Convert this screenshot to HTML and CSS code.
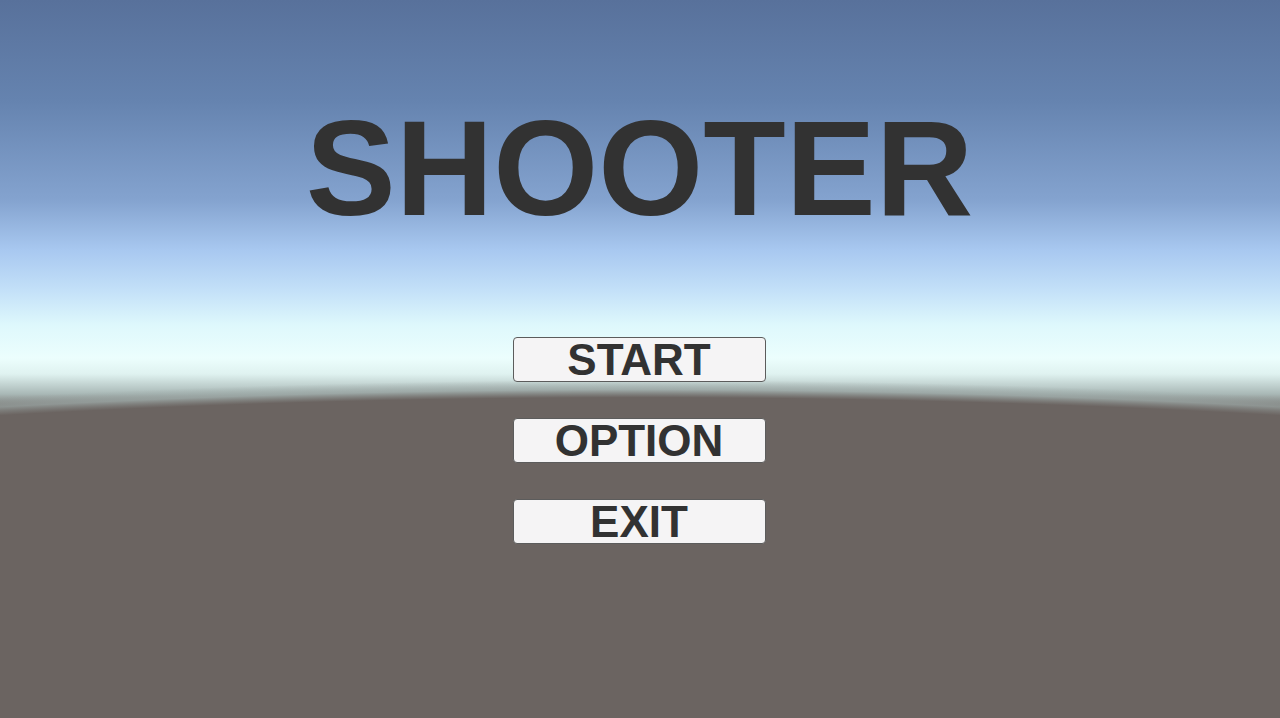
FILE: index.html
```html
<!DOCTYPE html>
<html lang="en">

<head>
    <meta charset="UTF-8">
    <meta name="viewport" content="width=device-width, initial-scale=1.0">
    <title>SHOOTER</title>
    <link rel="stylesheet" href="styles.css">
</head>

<body>
    <div id="scene">
        <h1 class="title">SHOOTER</h1>
        <ul class="menu">
            <li><button class="menu-btn" id="start">START</button></li>
            <li><button class="menu-btn" id="option">OPTION</button></li>
            <li><button class="menu-btn" id="exit">EXIT</button></li>
        </ul>
    </div>
</body>

</html>
```

FILE: styles.css
```css
* {
    margin: 0;
    padding: 0;
}

html,
body {
    width: 100%;
    height: 100%;
    overflow: hidden;
}

li {
    list-style: none;
}

/* skybox: sky fading to the bright horizon, then the curved ground */
#scene {
    height: 718px;
    display: flex;
    flex-direction: column;
    align-items: center;
    padding-top: 102px;
    box-sizing: border-box;
    font-family: "Liberation Sans", Arial, sans-serif;
    background:
        radial-gradient(ellipse 2000px 320px at 50% 700px,
            #6b6461 0,
            #6b6461 94.5%,
            rgba(150, 160, 158, 0.7) 97%,
            rgba(200, 220, 218, 0) 100%),
        linear-gradient(to bottom,
            #58719b 0,
            #6583af 100px,
            #84a3cf 200px,
            #a8c8f0 250px,
            #c3e0f8 290px,
            #def8fc 325px,
            #ecfefd 358px,
            #dff2f0 374px,
            #a9b8b6 394px,
            #6b6461 410px,
            #69625e 718px);
}

.title {
    font-size: 135px;
    line-height: 134px;
    font-weight: bold;
    color: #323232;
    margin-bottom: 101px;
    margin-right: 1px;
}

.menu {
    display: flex;
    flex-direction: column;
    gap: 36px;
    margin-right: 2px;
}

.menu-btn {
    display: block;
    width: 253px;
    height: 45px;
    line-height: 43px;
    background-color: #f5f4f5;
    border: 1px solid #5c5c5c;
    border-radius: 4px;
    font-family: "Liberation Sans", Arial, sans-serif;
    font-size: 44px;
    font-weight: bold;
    color: #323232;
    text-align: center;
    cursor: pointer;
}
```
